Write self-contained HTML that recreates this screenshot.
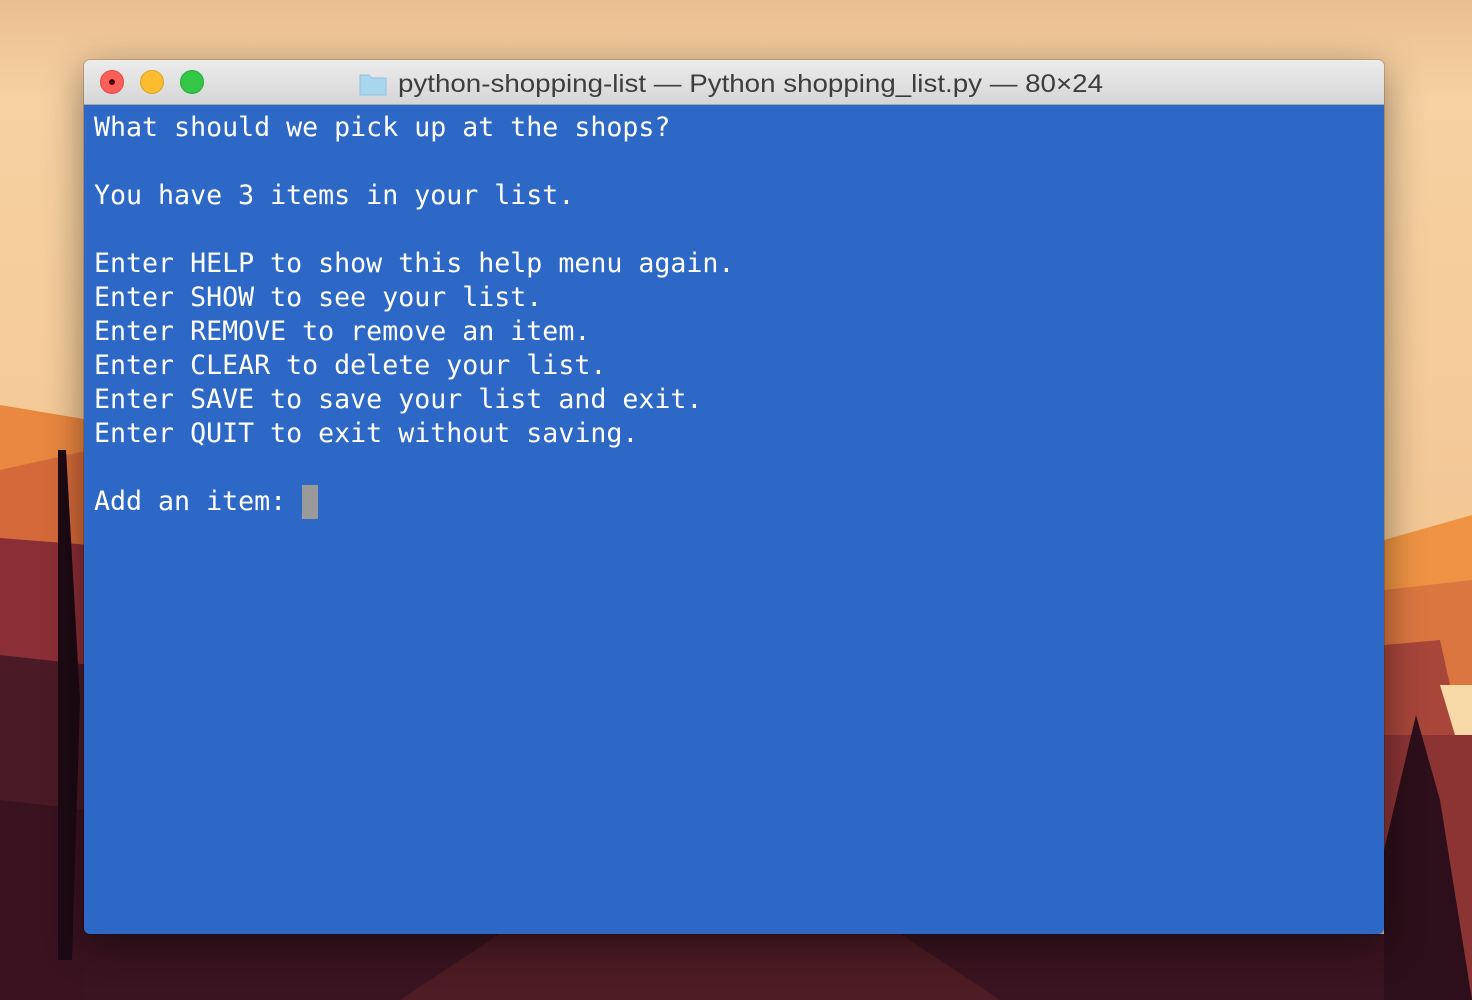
<!DOCTYPE html>
<html><head><meta charset="utf-8"><style>
html,body{margin:0;padding:0;width:1472px;height:1000px;overflow:hidden;background:#f5cf9f}
#bg{position:absolute;left:0;top:0}
#win{position:absolute;left:84px;top:60px;width:1300px;height:874px;border-radius:6px;overflow:hidden;box-shadow:0 12px 40px rgba(0,0,0,.45),0 0 0 1px rgba(0,0,0,.15)}
#tb{height:44px;background:linear-gradient(#ececec,#d6d6d6);border-bottom:1px solid #a8a8a8;position:relative}
.dot{position:absolute;top:10px;width:24px;height:24px;border-radius:50%;box-sizing:border-box}
#term{position:absolute;top:45px;left:0;right:0;bottom:0;background:#2e68c6}
pre{margin:0;position:absolute;left:10px;top:6px;font-family:"DejaVu Sans Mono","Liberation Mono",monospace;font-size:26.6px;line-height:34px;color:#fff}
.cur{display:inline-block;width:16px;height:34px;background:#9a9a9a;vertical-align:top}
</style></head><body>
<svg id="bg" width="1472" height="1000">
<defs><linearGradient id="sky" x1="0" y1="0" x2="0" y2="1"><stop offset="0" stop-color="#e9bf91"/><stop offset=".1" stop-color="#f7d1a2"/><stop offset=".5" stop-color="#f3c895"/></linearGradient></defs>
<rect width="1472" height="1000" fill="url(#sky)"/>
<polygon points="0,405 90,420 90,1000 0,1000" fill="#ea8740"/>
<polygon points="0,470 90,450 90,1000 0,1000" fill="#d46a3a"/>
<polygon points="0,538 90,545 90,1000 0,1000" fill="#8c2e36"/>
<polygon points="0,655 90,665 90,1000 0,1000" fill="#4a1a26"/>
<polygon points="0,800 90,810 90,1000 0,1000" fill="#3a1220"/>
<polygon points="58,450 66,450 80,700 72,960 58,960" fill="#1e0a14"/>
<polygon points="1384,540 1472,515 1472,1000 1384,1000" fill="#ee9343"/>
<polygon points="1384,590 1472,580 1472,1000 1384,1000" fill="#dc7640"/>
<polygon points="1384,645 1440,640 1450,685 1472,685 1472,1000 1384,1000" fill="#a8463a"/>
<polygon points="1440,685 1472,685 1472,735 1455,735" fill="#f7d9a8"/>
<polygon points="1384,735 1472,735 1472,1000 1384,1000" fill="#8c3434"/>
<polygon points="1416,715 1440,800 1472,1000 1384,1000 1384,850" fill="#2c0f1a"/>
<polygon points="84,934 1384,934 1384,1000 84,1000" fill="#3a1420"/>
<polygon points="500,934 900,934 1000,1000 400,1000" fill="#4e1c24"/>
</svg>
<div id="win">
<div id="tb">
<div class="dot" style="left:16px;background:#fc5f57;border:1px solid #df4744"><div style="position:absolute;left:8px;top:8px;width:6px;height:6px;border-radius:50%;background:#4d0000"></div></div>
<div class="dot" style="left:56px;background:#fdbc2e;border:1px solid #dea123"></div>
<div class="dot" style="left:96px;background:#33c748;border:1px solid #27aa35"></div>
<svg style="position:absolute;left:274px;top:7px" width="760" height="32">
<path d="M2 8h9l3 3h14v17H2z" fill="#a9d6ef" stroke="#92c3e0" stroke-width="1"/>
<text x="40" y="25" font-family="Liberation Sans,sans-serif" font-size="25" fill="#3d3d3d" textLength="705" lengthAdjust="spacingAndGlyphs">python-shopping-list — Python shopping_list.py — 80×24</text>
</svg>
</div>
<div id="term"><pre>What should we pick up at the shops?

You have 3 items in your list.

Enter HELP to show this help menu again.
Enter SHOW to see your list.
Enter REMOVE to remove an item.
Enter CLEAR to delete your list.
Enter SAVE to save your list and exit.
Enter QUIT to exit without saving.

Add an item: <span class="cur"></span></pre></div>
</div>
</body></html>
